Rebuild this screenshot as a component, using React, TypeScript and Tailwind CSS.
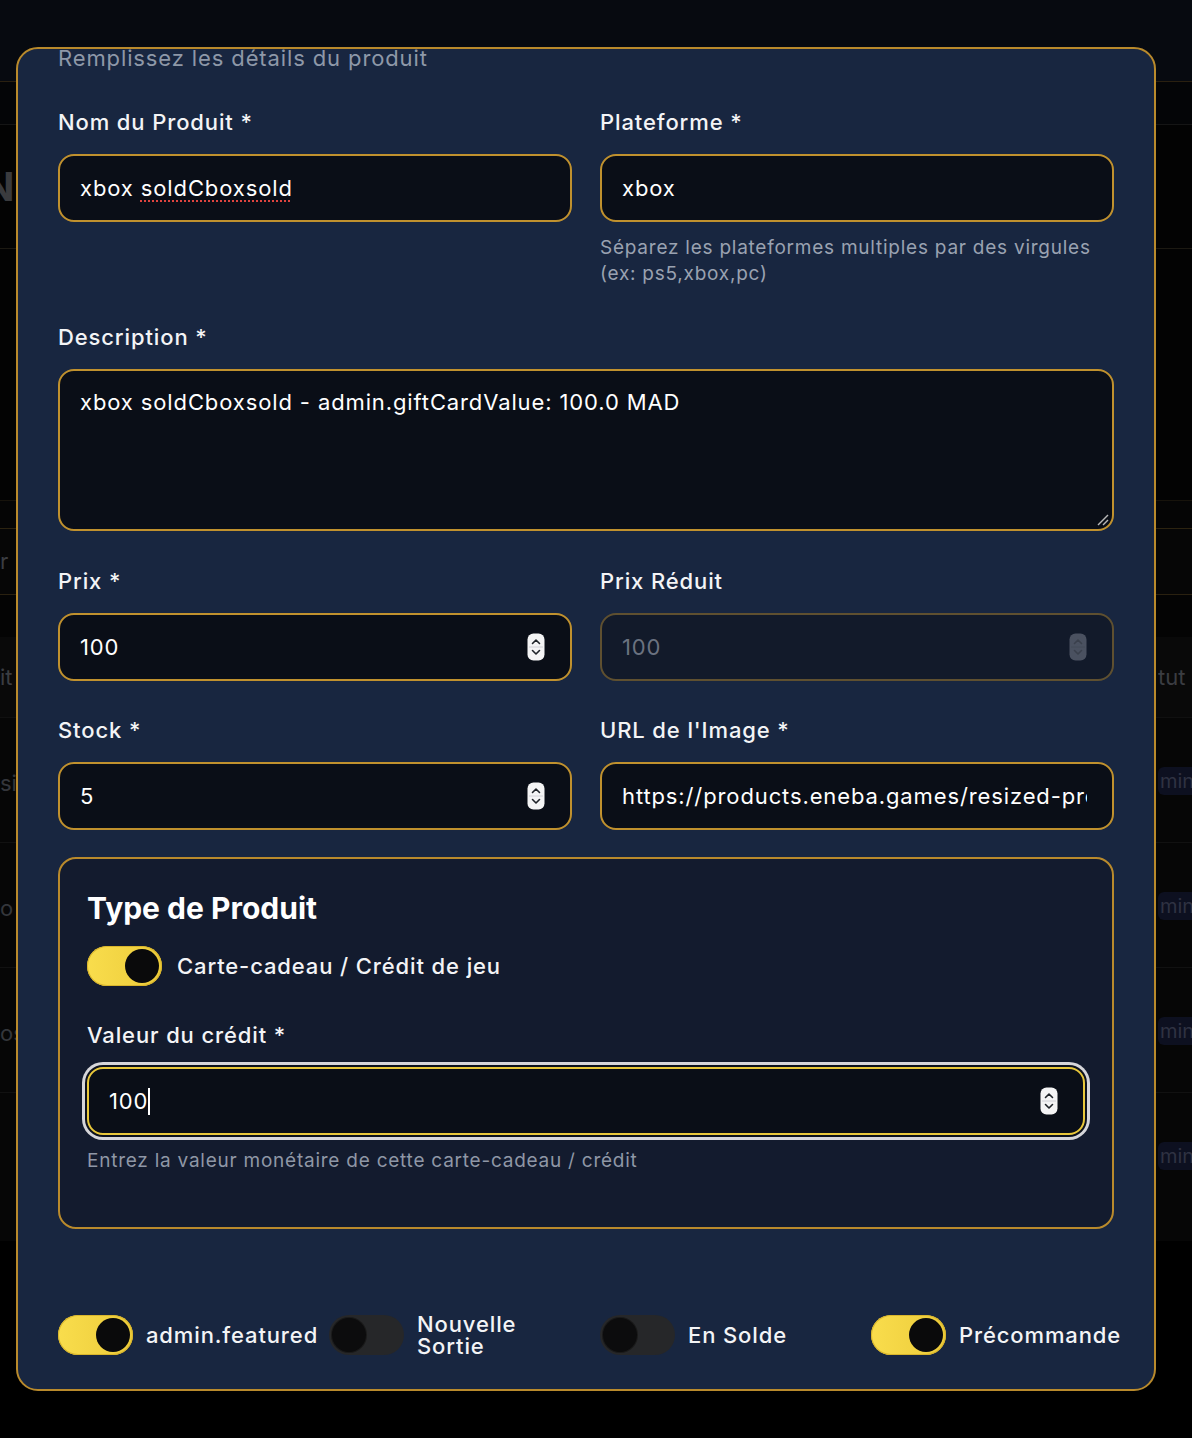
import React from "react";

function Spinner({ disabled = false }: { disabled?: boolean }) {
  const fill = disabled ? "#4a5160" : "#f4f4f5";
  const stroke = disabled ? "#3a404c" : "#1f2329";
  return (
    <svg width="18" height="28" viewBox="0 0 18 28" className="shrink-0">
      <rect x="0.5" y="0.5" width="17" height="27" rx="6" fill={fill} />
      <line x1="2" y1="14" x2="16" y2="14" stroke={disabled ? "#434956" : "#c9c9cf"} strokeWidth="0.8" />
      <path d="M5.5 10.5 L9 7 L12.5 10.5" stroke={stroke} strokeWidth="1.6" fill="none" strokeLinecap="round" strokeLinejoin="round" />
      <path d="M5.5 17.5 L9 21 L12.5 17.5" stroke={stroke} strokeWidth="1.6" fill="none" strokeLinecap="round" strokeLinejoin="round" />
    </svg>
  );
}

function Label({ children }: { children: React.ReactNode }) {
  return (
    <div className="mb-[18px] text-[22px] font-medium leading-[28px] tracking-[0.04em] text-[#f3f4f6]">{children}</div>
  );
}

function Box({
  children,
  spinner,
  disabled,
}: {
  children: React.ReactNode;
  spinner?: boolean;
  disabled?: boolean;
}) {
  return (
    <div
      className={
        disabled
          ? "flex h-[68px] items-center rounded-[16px] border-2 border-[#5f5030] bg-[#121a2a] pl-[20px] pr-[25px] text-[22px] tracking-[0.04em] text-[#6b7280]"
          : "flex h-[68px] items-center rounded-[16px] border-2 border-[#c0912e] bg-[#0a0e17] pl-[20px] pr-[25px] text-[22px] tracking-[0.04em] text-white"
      }
    >
      <div className="min-w-0 flex-1 overflow-hidden whitespace-nowrap">{children}</div>
      {spinner && <Spinner disabled={disabled} />}
    </div>
  );
}

function Toggle({ on }: { on: boolean }) {
  return on ? (
    <div className="flex h-[40px] w-[75px] shrink-0 items-center justify-end rounded-full bg-gradient-to-r from-[#f9dd4c] to-[#eccb3a] p-[3px] shadow-[inset_0_0_0_1px_#d9b52c]">
      <div className="h-[34px] w-[34px] rounded-full bg-[#0a0a0b]" />
    </div>
  ) : (
    <div className="flex h-[40px] w-[75px] shrink-0 items-center justify-start rounded-full bg-[#262729] p-[3px]">
      <div className="h-[34px] w-[34px] rounded-full bg-[#0c0c0d] shadow-[0_0_0_1px_#1a1a1a]" />
    </div>
  );
}

function BgRow({ left, right, h, cls }: { left?: string; right?: string; h: string; cls: string }) {
  return (
    <div className={`flex items-center justify-between ${h} ${cls}`}>
      <div className="w-[16px] overflow-hidden whitespace-nowrap text-[22px] text-[#3b3d42]">{left}</div>
      {right ? (
        <div className="w-[34px] overflow-hidden whitespace-nowrap text-[22px] text-[#3b3d42]">{right}</div>
      ) : null}
    </div>
  );
}

function MinBadgeRow({ left, h, cls, badge }: { left?: string; h: string; cls: string; badge: boolean }) {
  return (
    <div className={`flex items-start justify-between ${h} ${cls}`}>
      <div className="mt-[49px] w-[16px] overflow-hidden whitespace-nowrap text-[22px] text-[#34363b]">{left}</div>
      {badge ? (
        <div className="mt-[49px] w-[34px] overflow-hidden whitespace-nowrap rounded-l-[6px] bg-[#0d1020] pl-[2px] text-[20px] leading-[28px] text-[#2f3242]">
          min
        </div>
      ) : null}
    </div>
  );
}

export default function App() {
  return (
    <div className="relative h-[1438px] w-full overflow-hidden bg-black font-['Inter','Noto_Sans',sans-serif]">
      {/* dimmed page behind the dialog */}
      <div className="flex flex-col">
        <div className="h-[82px] border-b border-[#2a2010] bg-[#070a10]" />
        <div className="h-[43px] border-b border-[#151515] bg-[#040507]" />
        <div className="flex h-[124px] items-center border-b border-[#1c1912] bg-[#030303]">
          <span className="ml-[-16px] text-[40px] font-bold text-[#3a3b3e]">N</span>
        </div>
        <div className="h-[252px] border-b border-[#17130b] bg-[#030303]" />
        <div className="h-[28px] border-b border-[#2c2310] bg-[#050505]" />
        <BgRow left="r" right="" h="h-[66px]" cls="border-b border-[#2a2110] bg-[#060606]" />
        <div className="h-[42px] bg-[#040404]" />
        <BgRow left="it" right="tut" h="h-[81px]" cls="border-b border-[#101010] bg-[#090909]" />
        <MinBadgeRow left="si" h="h-[125px]" cls="border-b border-[#111111] bg-[#060606]" badge />
        <MinBadgeRow left="o" h="h-[125px]" cls="border-b border-[#111111] bg-[#060606]" badge />
        <MinBadgeRow left="os" h="h-[125px]" cls="border-b border-[#111111] bg-[#060606]" badge />
        <MinBadgeRow left="" h="h-[148px]" cls="bg-[#060606]" badge />
      </div>

      {/* dialog */}
      <div className="absolute left-[16px] top-[47px] h-[1344px] w-[1140px] overflow-hidden rounded-[22px] border-2 border-[#b98a2c] bg-[#182640]">
        <div className="flex flex-col px-10">
          <div className="mt-[-5px] text-[22px] leading-[28px] tracking-[0.04em] text-[#8e98a8]">
            Remplissez les détails du produit
          </div>

          <div className="mt-[36px] grid grid-cols-2 gap-x-7">
            <div>
              <Label>Nom du Produit *</Label>
              <Box>
                xbox{" "}
                <span className="underline decoration-[#e0443f] decoration-dotted decoration-2 underline-offset-[5px]">
                  soldCboxsold
                </span>
              </Box>
            </div>
            <div>
              <Label>Plateforme *</Label>
              <Box>xbox</Box>
              <div className="mt-[13px] text-[19px] leading-[26px] tracking-[0.04em] text-[#9aa2b1]">
                Séparez les plateformes multiples par des virgules (ex: ps5,xbox,pc)
              </div>
            </div>
          </div>

          <div className="mt-[36px]">
            <Label>Description *</Label>
            <div className="relative h-[162px] rounded-[16px] border-2 border-[#c0912e] bg-[#0a0e17] px-[20px] pt-[17px] text-[22px] leading-[28px] tracking-[0.04em] text-white">
              xbox soldCboxsold - admin.giftCardValue: 100.0 MAD
              <svg className="absolute bottom-[3px] right-[3px]" width="14" height="14" viewBox="0 0 14 14">
                <line x1="3" y1="13" x2="13" y2="3" stroke="#b8b8b8" strokeWidth="1.4" />
                <line x1="8" y1="13" x2="13" y2="8" stroke="#b8b8b8" strokeWidth="1.4" />
              </svg>
            </div>
          </div>

          <div className="mt-[36px] grid grid-cols-2 gap-x-7">
            <div>
              <Label>Prix *</Label>
              <Box spinner>100</Box>
            </div>
            <div>
              <Label>Prix Réduit</Label>
              <Box spinner disabled>
                100
              </Box>
            </div>
          </div>

          <div className="mt-[35px] grid grid-cols-2 gap-x-7">
            <div>
              <Label>Stock *</Label>
              <Box spinner>5</Box>
            </div>
            <div>
              <Label>URL de l'Image *</Label>
              <Box>https://products.eneba.games/resized-products/xbox-gift-card-100</Box>
            </div>
          </div>

          <div className="mt-[27px] flex h-[372px] flex-col rounded-[18px] border-2 border-[#b98a2c] bg-[#131b2e] px-[27px] pt-[31px]">
            <div className="text-[30px] font-bold leading-[36px] text-white">Type de Produit</div>
            <div className="mt-[20px] flex items-center gap-[15px]">
              <Toggle on />
              <span className="text-[22px] font-medium tracking-[0.04em] text-[#f3f4f6]">Carte-cadeau / Crédit de jeu</span>
            </div>
            <div className="mt-[35px]">
              <Label>Valeur du crédit *</Label>
              <div className="flex h-[68px] items-center rounded-[16px] border-2 border-[#e8c73a] bg-[#0a0e17] pl-[20px] pr-[25px] text-[22px] tracking-[0.04em] text-white shadow-[0_0_0_2px_#0c111c,0_0_0_5px_#d6d6da]">
                <div className="flex flex-1 items-center">
                  <span>100</span>
                  <span className="inline-block h-[27px] w-[2px] bg-white" />
                </div>
                <Spinner />
              </div>
              <div className="mt-[13px] text-[19px] leading-[26px] tracking-[0.04em] text-[#8f97a6]">
                Entrez la valeur monétaire de cette carte-cadeau / crédit
              </div>
            </div>
          </div>

          <div className="mt-[84px] grid grid-cols-4 gap-x-7">
            <div className="flex items-center gap-[13px]">
              <Toggle on />
              <span className="text-[22px] font-medium leading-[22px] tracking-[0.04em] text-[#f3f4f6]">admin.featured</span>
            </div>
            <div className="flex items-center gap-[13px]">
              <Toggle on={false} />
              <span className="text-[22px] font-medium leading-[22px] tracking-[0.04em] text-[#f3f4f6]">Nouvelle Sortie</span>
            </div>
            <div className="flex items-center gap-[13px]">
              <Toggle on={false} />
              <span className="text-[22px] font-medium leading-[22px] tracking-[0.04em] text-[#f3f4f6]">En Solde</span>
            </div>
            <div className="flex items-center gap-[13px]">
              <Toggle on />
              <span className="text-[22px] font-medium leading-[22px] tracking-[0.04em] text-[#f3f4f6]">Précommande</span>
            </div>
          </div>
        </div>
      </div>
    </div>
  );
}
